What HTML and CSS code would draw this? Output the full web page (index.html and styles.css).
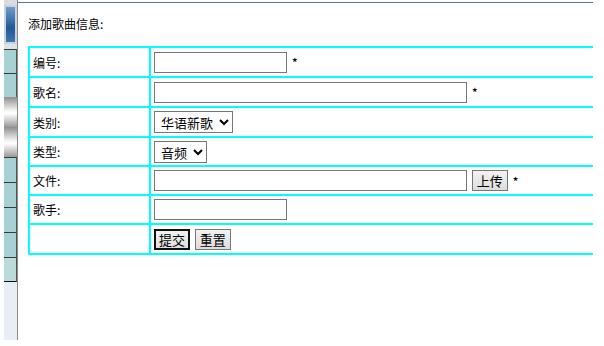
FILE: index.html
```html
<!DOCTYPE html>
<html>
  <head>
    <meta charset="utf-8">
    <title>添加歌曲信息</title>
    <link rel="stylesheet" href="styles.css">
  </head>
  <body>
    <div id="side">
      <div class="strip">
        <div class="topcap"></div>
        <div class="blueBtn"></div>
        <div class="gap"></div>
        <div class="tealBtn"></div>
        <div class="tealBtn"></div>
        <div class="silverBtn"></div>
        <div class="silverBtn"></div>
        <div class="tealBtn tall"></div>
        <div class="tealBtn tall"></div>
        <div class="tealBtn tall"></div>
        <div class="tealBtn tall"></div>
        <div class="tealBtn pale"></div>
        <div class="lavender"></div>
      </div>
    </div>
    <div id="frame">
      <div class="title">添加歌曲信息:</div>
      <form>
        <table id="songForm">
          <tr>
            <td class="label">编号:</td>
            <td><input type="text" class="short"> <span class="req">*</span></td>
          </tr>
          <tr>
            <td class="label">歌名:</td>
            <td><input type="text" class="long"> <span class="req">*</span></td>
          </tr>
          <tr>
            <td class="label">类别:</td>
            <td>
              <select class="pick wide">
                <option>华语新歌</option>
              </select>
            </td>
          </tr>
          <tr class="tight">
            <td class="label">类型:</td>
            <td>
              <select class="pick narrow">
                <option>音频</option>
              </select>
            </td>
          </tr>
          <tr class="tight">
            <td class="label">文件:</td>
            <td><input type="text" class="long"> <button type="button" class="btn upload">上传</button> <span class="req">*</span></td>
          </tr>
          <tr class="tight">
            <td class="label">歌手:</td>
            <td><input type="text" class="short"></td>
          </tr>
          <tr>
            <td class="label"></td>
            <td><button type="button" class="btn primary">提交</button> <button type="reset" class="btn reset">重置</button></td>
          </tr>
        </table>
      </form>
    </div>
  </body>
</html>
```

FILE: styles.css
```css
body {
  margin: 0;
  display: flex;
  font-family: "Noto Sans CJK SC", "DejaVu Sans", sans-serif;
  font-size: 12px;
  color: #000;
  background: #fff;
}

#side {
  width: 14px;
  padding-left: 4px;
  flex: none;
}

.strip {
  display: flex;
  flex-direction: column;
  border-right: 1px solid #8a8a8a;
}

.topcap {
  height: 5px;
  background: #d8dde2;
}

.blueBtn {
  height: 35px;
  border: 2px solid #c9d3de;
  background: linear-gradient(#6f9cc8, #1f5896 60%, #3d76b0);
}

.gap {
  height: 5px;
  background: #dfe3e6;
}

.tealBtn {
  height: 23px;
  background: #a6d2d6;
  border-top: 1px solid #3a3a3a;
  border-right: 1px solid #555;
}

.tealBtn.tall {
  height: 24px;
}

.tealBtn.pale {
  height: 23px;
  background: #bbdada;
  border-bottom: 1px solid #111;
}

.silverBtn {
  height: 30px;
  background: linear-gradient(#8e8e8e, #f4f4f4 45%, #ffffff 55%, #9a9a9a);
}

.lavender {
  height: 58px;
  background: #e8edf6;
}

#frame {
  width: 565px;
  flex: none;
  margin-top: 2px;
  padding-left: 10px;
  border-top: 1px solid #5574a8;
  overflow: hidden;
}

.title {
  margin-top: 13px;
  line-height: 16px;
}

#songForm {
  margin-top: 14px;
  width: 640px;
  border: 1px solid #00ffff;
  border-spacing: 0;
}

#songForm td {
  border: 1px solid #00ffff;
  padding: 0 3px;
  height: 28px;
  vertical-align: middle;
}

#songForm tr.tight td {
  height: 27px;
}

#songForm td.label {
  width: 113px;
}

input[type="text"] {
  box-sizing: border-box;
  height: 21px;
  margin: 0;
  padding: 0 2px;
  border: 1px solid #767676;
  vertical-align: middle;
  font-family: inherit;
  font-size: 12px;
}

.short {
  width: 133px;
}

.long {
  width: 313px;
}

.req {
  margin-left: 2px;
  vertical-align: -3px;
  font-size: 13px;
}

.pick {
  box-sizing: border-box;
  height: 22px;
  margin: 0;
  padding: 0 2px;
  border: 1px solid #767676;
  border-radius: 0;
  background: #fff;
  font-family: inherit;
  font-size: 13px;
  vertical-align: middle;
}

.pick.wide {
  width: 79px;
}

.pick.narrow {
  width: 53px;
}

.btn {
  box-sizing: border-box;
  height: 21px;
  margin: 0;
  padding: 0 4px;
  border: 1px solid #767676;
  border-radius: 0;
  background: linear-gradient(#f2f2f2, #dddddd);
  font-family: inherit;
  font-size: 13px;
  line-height: 17px;
  vertical-align: middle;
}

.upload {
  margin-left: 2px;
}

.primary {
  border: 2px solid #111;
  padding: 0 3px;
}

.reset {
  margin-left: 2px;
}
```
